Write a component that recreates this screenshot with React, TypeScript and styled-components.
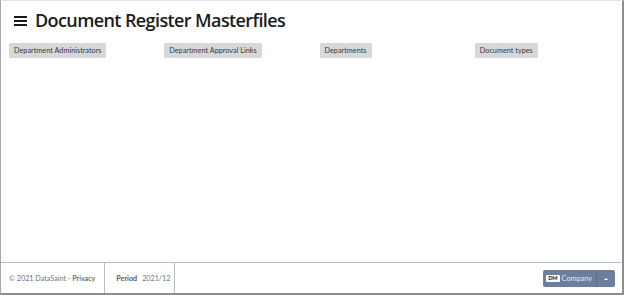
import styled, { createGlobalStyle } from 'styled-components';

const GlobalStyle = createGlobalStyle`
  html, body {
    margin: 0;
    padding: 0;
    background: #ffffff;
  }
  body {
    font-family: Lato, 'Liberation Sans', sans-serif;
  }
`;

const masterfiles = [
  'Department Administrators',
  'Department Approval Links',
  'Departments',
  'Document types',
];

const Frame = styled.div`
  box-sizing: border-box;
  width: 624px;
  height: 295px;
  display: flex;
  flex-direction: column;
  border-top: 1px solid #e3e3e3;
  border-left: 1px solid #a6a6a6;
  border-right: 2px solid #8e8e8e;
  border-bottom: 2px solid #8e8e8e;
`;

const Header = styled.header`
  display: flex;
  align-items: center;
  gap: 8px;
  padding: 8px 0 0 13px;
  height: 22px;
`;

const Burger = styled.span`
  display: flex;
  flex-direction: column;
  gap: 2px;
  width: 13px;
  margin-top: 1px;

  & > i {
    display: block;
    height: 2px;
    background: #1a1a1a;
  }
`;

const Title = styled.h1`
  margin: 0;
  font-family: 'Open Sans', sans-serif;
  font-size: 18px;
  font-weight: 600;
  letter-spacing: -0.6px;
  color: #1b1b1b;
  line-height: 22px;
`;

const LinkGrid = styled.nav`
  display: grid;
  grid-template-columns: repeat(4, 1fr);
  padding-top: 12px;
`;

const Cell = styled.div`
  display: flex;
  padding-left: 8px;
`;

const LinkButton = styled.span`
  display: block;
  height: 15px;
  line-height: 15px;
  padding: 0 5px;
  background: #d6d8db;
  border-radius: 1px;
  font-family: Lato, sans-serif;
  font-size: 7.3px;
  color: #3a3a3a;
  white-space: nowrap;
`;

const Spacer = styled.div`
  flex: 1;
`;

const Footer = styled.footer`
  display: flex;
  align-items: stretch;
  height: 30px;
  border-top: 1px solid #b4c0cf;
  font-family: Lato, sans-serif;
  font-size: 7.2px;
  color: #707780;
`;

const FooterCell = styled.div`
  display: flex;
  align-items: center;
  gap: 4px;
  border-right: 1px solid #b4c0cf;
`;

const FirstCell = styled(FooterCell)`
  padding: 0 9px 0 8px;
`;

const PeriodCell = styled(FooterCell)`
  padding: 0 4px 0 11px;
  gap: 5px;
`;

const PrivacyLink = styled.a`
  color: #2c3c5c;
  text-decoration: none;
`;

const Label = styled.b`
  font-weight: 700;
  color: #555c66;
`;

const FooterRight = styled.div`
  flex: 1;
  display: flex;
  align-items: center;
  justify-content: flex-end;
  padding-right: 7px;
  padding-top: 1px;
`;

const SplitButton = styled.div`
  display: flex;
  height: 17px;
  background: #6b7ea0;
  border-radius: 2px;
  color: #ffffff;
`;

const MainPart = styled.span`
  display: flex;
  align-items: center;
  gap: 2px;
  padding: 0 4px 0 3px;
  font-size: 7.3px;
  color: #e6eaf1;
`;

const Badge = styled.span`
  background: #ffffff;
  color: #1d2433;
  font-weight: 900;
  font-size: 5.5px;
  line-height: 7px;
  padding: 0 2px;
  border-radius: 1px;
`;

const CaretPart = styled.span`
  display: flex;
  align-items: center;
  justify-content: center;
  width: 18px;
  border-left: 1px solid #5b6d8d;

  &::after {
    content: '';
    border-left: 2px solid transparent;
    border-right: 2px solid transparent;
    border-bottom: 2px solid #ffffff;
  }
`;

export default function App() {
  return (
    <>
      <GlobalStyle />
      <Frame>
        <Header>
          <Burger>
            <i />
            <i />
            <i />
          </Burger>
          <Title>Document Register Masterfiles</Title>
        </Header>
        <LinkGrid>
          {masterfiles.map((name) => (
            <Cell key={name}>
              <LinkButton>{name}</LinkButton>
            </Cell>
          ))}
        </LinkGrid>
        <Spacer />
        <Footer>
          <FirstCell>
            <span>
              © 2021 DataSaint - <PrivacyLink href="#">Privacy</PrivacyLink>
            </span>
          </FirstCell>
          <PeriodCell>
            <Label>Period</Label>
            <span>2021/12</span>
          </PeriodCell>
          <FooterRight>
            <SplitButton>
              <MainPart>
                <Badge>DM</Badge>
                Company
              </MainPart>
              <CaretPart />
            </SplitButton>
          </FooterRight>
        </Footer>
      </Frame>
    </>
  );
}
